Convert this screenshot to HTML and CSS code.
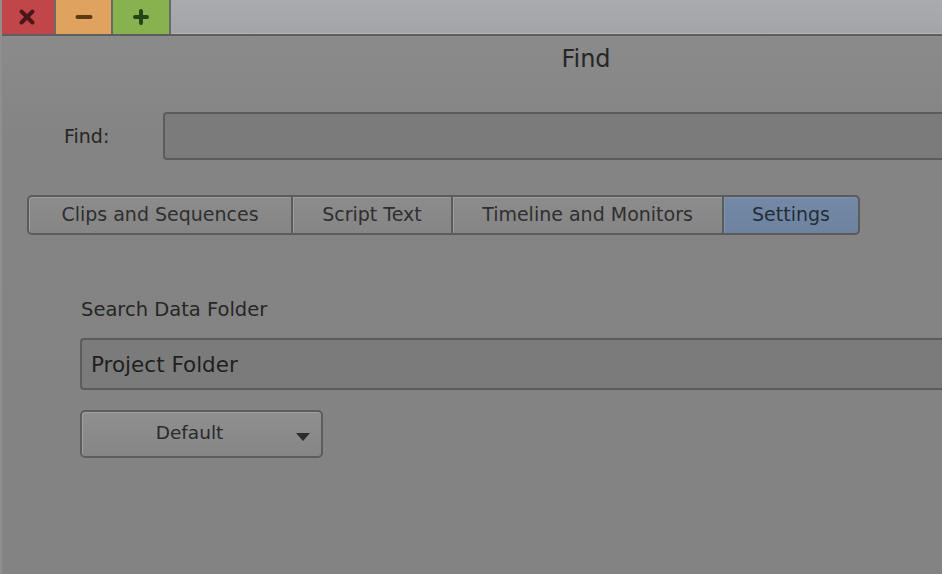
FILE: index.html
```html
<!DOCTYPE html>
<html lang="en">
<head>
<meta charset="UTF-8">
<title>Find</title>
<link rel="stylesheet" href="styles.css">
</head>
<body>

<div class="titlebar">
  <button class="win-btn close">
    <svg width="20" height="20" viewBox="0 0 20 20"><path d="M4.5 4.5 L15.5 15.5 M15.5 4.5 L4.5 15.5" stroke="#4a1618" stroke-width="4" stroke-linecap="round"/></svg>
  </button>
  <button class="win-btn minimize">
    <svg width="20" height="20" viewBox="0 0 20 20"><path d="M3.5 10 H16.5" stroke="#5a3a16" stroke-width="4" stroke-linecap="round"/></svg>
  </button>
  <button class="win-btn maximize">
    <svg width="20" height="20" viewBox="0 0 20 20"><path d="M4 10 H16 M10 4 V16" stroke="#254418" stroke-width="4" stroke-linecap="round"/></svg>
  </button>
  <div class="titlebar-fill"></div>
</div>

<main class="window">
  <h1 class="title">Find</h1>

  <div class="find-row">
    <label class="find-label">Find:</label>
    <div class="field find-field"></div>
  </div>

  <nav class="tabs">
    <button class="tab tab-clips">Clips and Sequences</button>
    <button class="tab tab-script">Script Text</button>
    <button class="tab tab-timeline">Timeline and Monitors</button>
    <button class="tab tab-settings active">Settings</button>
  </nav>

  <section class="settings">
    <p class="settings-label">Search Data Folder</p>
    <div class="field folder-field">Project Folder</div>
    <button class="dropdown">
      <span>Default</span>
      <svg class="caret" width="14" height="8" viewBox="0 0 14 8"><path d="M0 0 H14 L7 8 Z" fill="#2b2b2b"/></svg>
    </button>
  </section>
</main>

</body>
</html>
```

FILE: styles.css
```css
* {margin: 0; padding: 0; box-sizing: border-box; font-family: "DejaVu Sans", Verdana, sans-serif;}
html, body {height: 100%; overflow: hidden;}
body {
  background: linear-gradient(#8d8d8d, #848484 140px, #838383);
  color: #262626;
  border-left: 2px solid #8f8f8f;
}

.titlebar {display: flex; height: 36px; border-bottom: 2px solid #5e5e5e; margin-left: -2px;}
.win-btn {
  display: flex; align-items: center; justify-content: center;
  height: 34px; border: none; border-right: 2px solid #6a6a6a;
}
.win-btn svg {display: block;}
.close {width: 56px; background: #c0464a;}
.minimize {width: 57px; background: #e0a35f;}
.maximize {width: 58px; background: #86b250;}
.titlebar-fill {flex: 1; background: linear-gradient(#a9abaf, #a2a4a8); border-bottom: 1px solid #b5b5b5;}

.title {
  font-size: 24px; font-weight: normal; text-align: center;
  padding-left: 228px; margin-top: 9px; height: 31px; line-height: 28px;
}

.find-row {display: flex; align-items: center; margin-top: 36px;}
.find-label {font-size: 19px; width: 161px; padding-left: 62px;}
.field {
  background: #7b7b7b; border: 2px solid #5c5c5c; border-right: none;
  border-radius: 4px 0 0 4px; flex: 1;
}
.find-field {height: 48px;}

.tabs {display: flex; margin: 35px 0 0 25px;}
.tab {
  height: 40px; font-size: 19px; color: #2f2f2f; padding-bottom: 2px;
  background: linear-gradient(#8c8c8c, #858585);
  border: 2px solid #5b5b5b; border-left: none;
  box-shadow: inset 1px 1px 0 #9c9c9c;
}
.tab-clips {width: 266px; border-left: 2px solid #5b5b5b; border-radius: 5px 0 0 5px;}
.tab-script {width: 160px;}
.tab-timeline {width: 271px;}
.tab-settings {width: 136px; border-radius: 0 5px 5px 0;}
.tab.active {background: linear-gradient(#7489a6, #6d83a0); color: #252d38; box-shadow: inset 1px 1px 0 #8094b0;}

.settings {padding-left: 78px; margin-top: 62px;}
.settings-label {font-size: 19.5px; line-height: 26px; margin-left: 1px;}
.folder-field {
  height: 52px; margin-top: 15px; font-size: 21.5px; color: #1f1f1f;
  display: flex; align-items: center; padding-left: 9px;
}
.dropdown {
  position: relative; display: flex; align-items: center; justify-content: center;
  width: 243px; height: 48px; margin-top: 20px; padding-right: 24px; padding-bottom: 4px;
  font-size: 18.5px; color: #2a2a2a;
  background: linear-gradient(#8f8f8f, #868686);
  border: 2px solid #5d5d5d; border-radius: 5px;
  box-shadow: inset 1px 1px 0 #a0a0a0;
}
.caret {position: absolute; right: 11px; top: 21px;}
```
